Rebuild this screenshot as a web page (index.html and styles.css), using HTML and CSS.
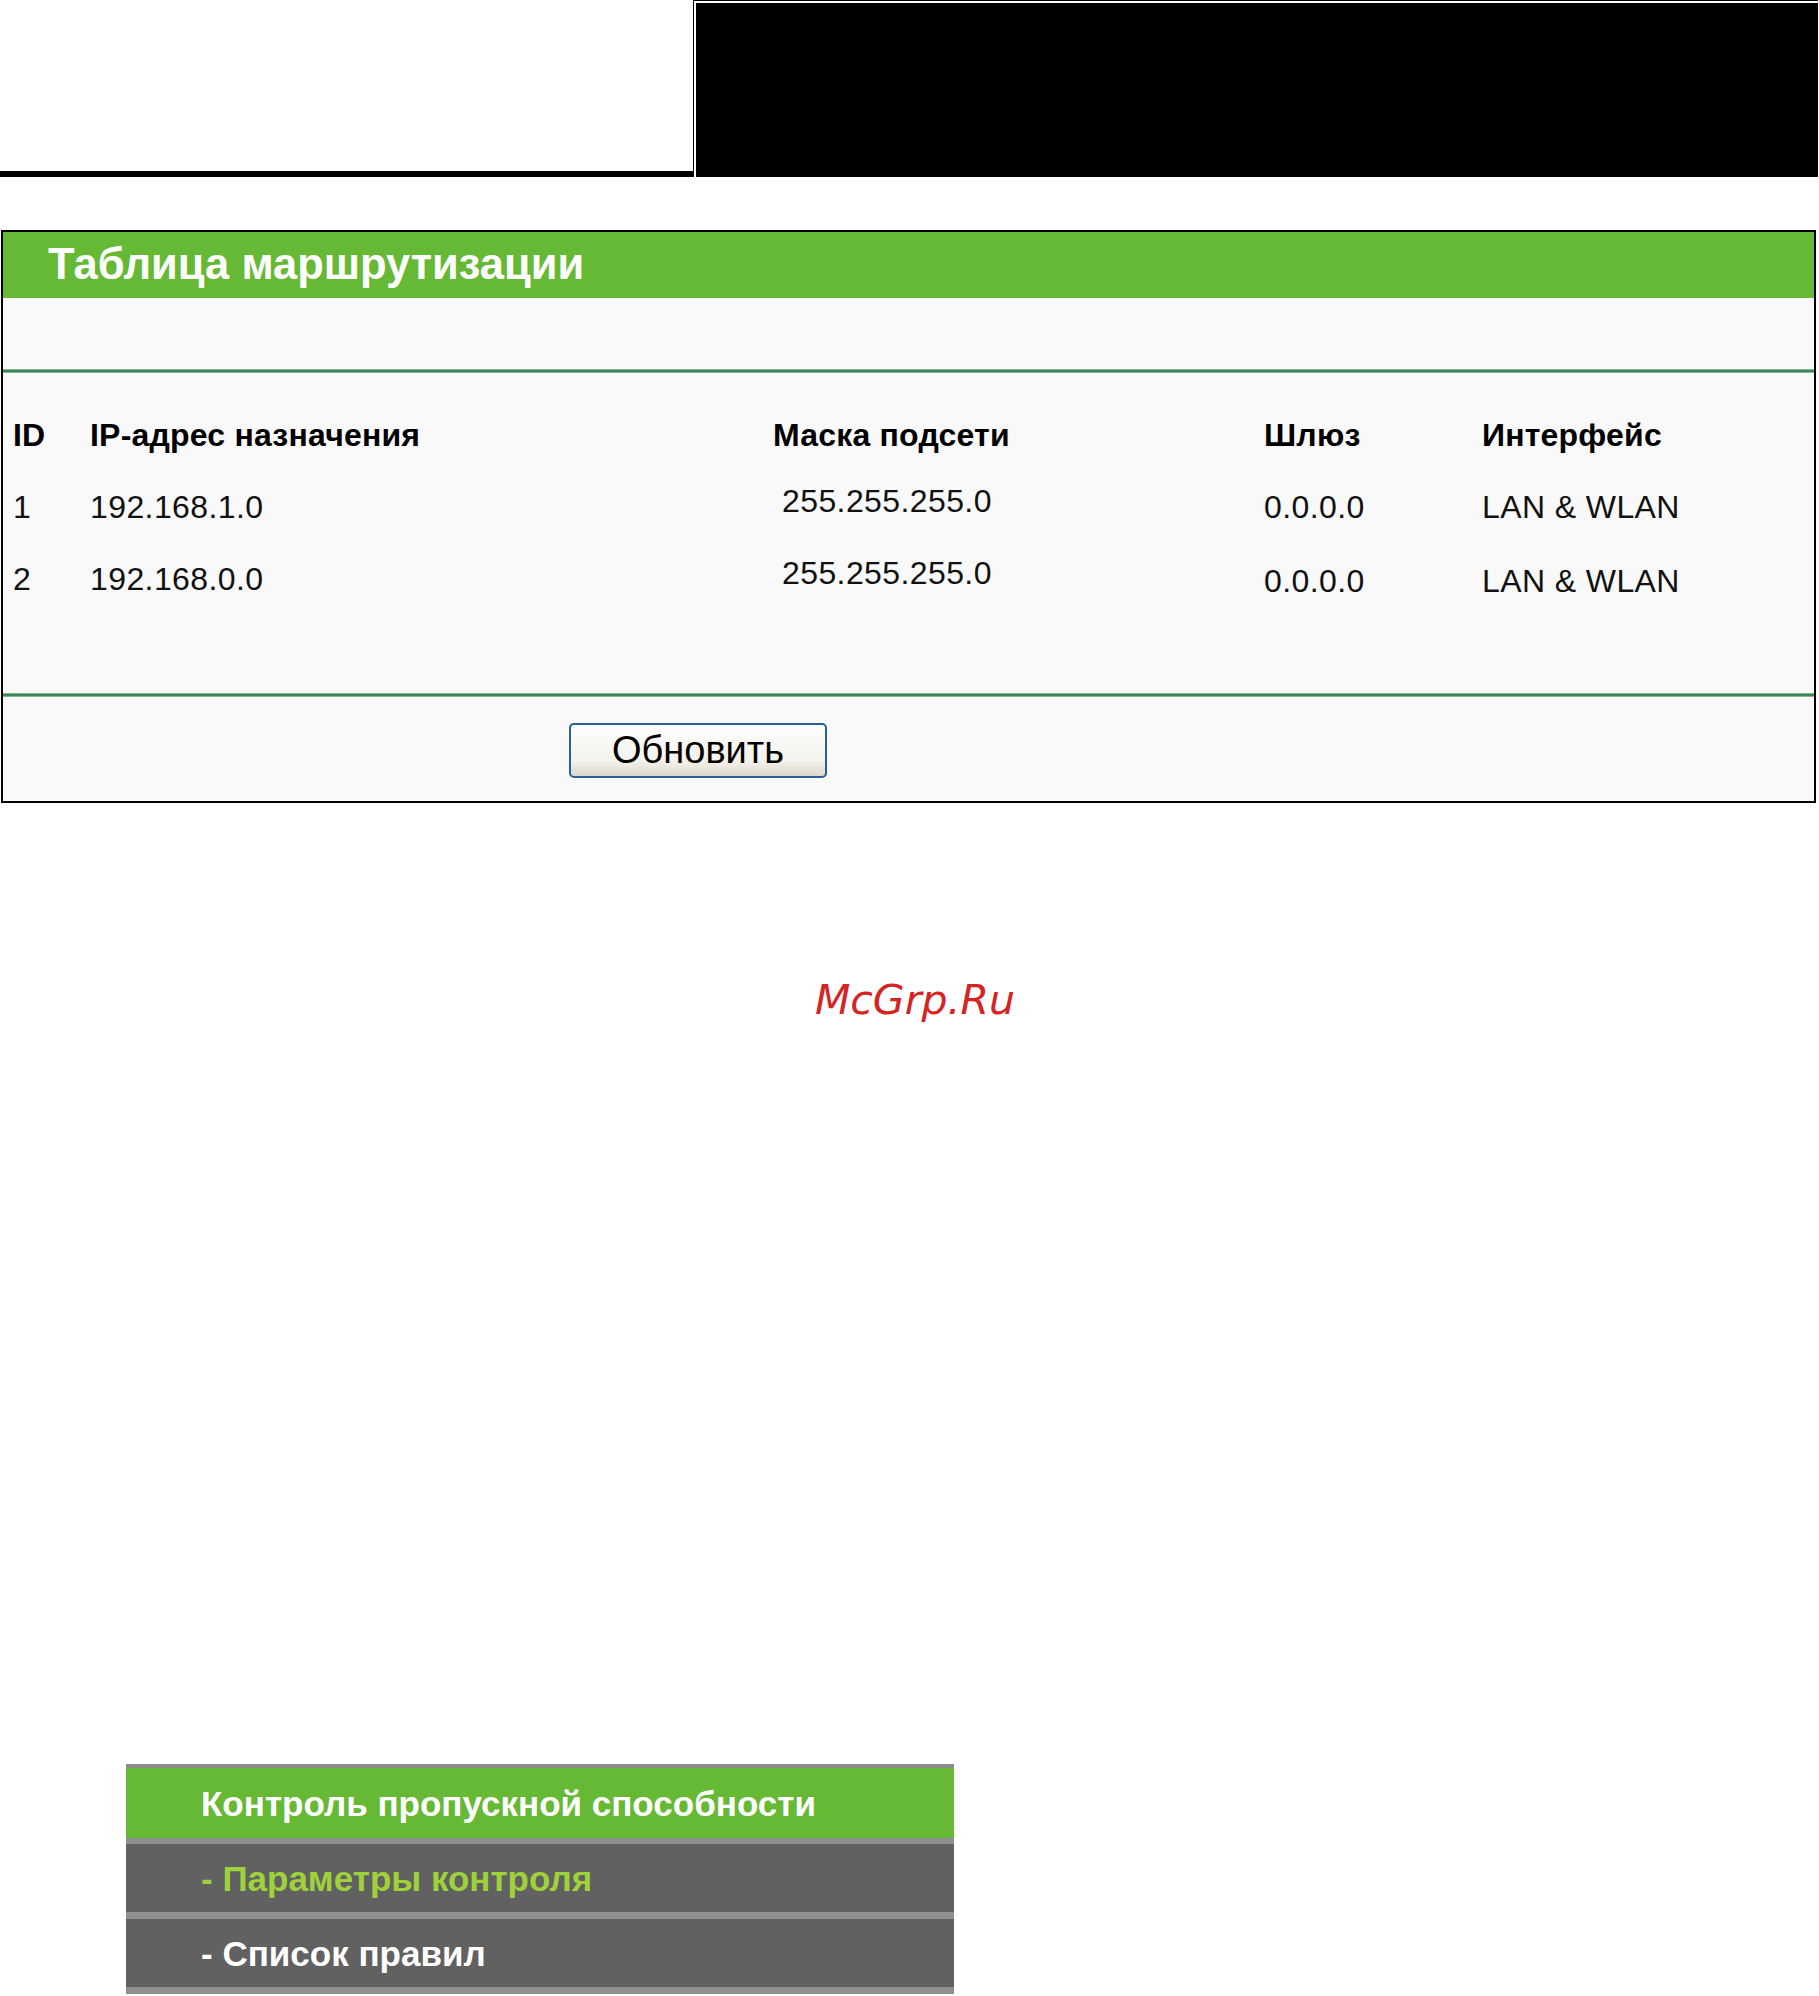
FILE: index.html
```html
<!DOCTYPE html>
<html lang="ru">
<head>
<meta charset="utf-8">
<title>Таблица маршрутизации</title>
<link rel="stylesheet" href="styles.css">
</head>
<body>
<div class="top">
  <div class="top-left"></div>
  <div class="top-right"><div class="top-inner"></div></div>
</div>

<div class="panel">
  <div class="panel-title">Таблица маршрутизации</div>
  <div class="panel-gap"></div>
  <div class="rule"></div>
  <div class="routes">
    <div class="th">ID</div>
    <div class="th">IP-адрес назначения</div>
    <div class="th">Маска подсети</div>
    <div class="th">Шлюз</div>
    <div class="th">Интерфейс</div>

    <div class="td">1</div>
    <div class="td">192.168.1.0</div>
    <div class="td mask">255.255.255.0</div>
    <div class="td">0.0.0.0</div>
    <div class="td">LAN &amp; WLAN</div>

    <div class="td">2</div>
    <div class="td">192.168.0.0</div>
    <div class="td mask">255.255.255.0</div>
    <div class="td low">0.0.0.0</div>
    <div class="td low">LAN &amp; WLAN</div>
  </div>
  <div class="rule"></div>
  <div class="actions">
    <button class="btn" type="button">Обновить</button>
  </div>
</div>

<div class="watermark">McGrp.Ru</div>

<div class="menu">
  <div class="menu-item menu-head">Контроль пропускной способности</div>
  <div class="menu-item menu-active">- Параметры контроля</div>
  <div class="menu-item">- Список правил</div>
</div>
</body>
</html>
```

FILE: styles.css
```css
html, body {
  margin: 0;
  padding: 0;
  background: #ffffff;
}

body {
  width: 1819px;
  height: 1996px;
  overflow: hidden;
  font-family: "Liberation Sans", Arial, sans-serif;
  color: #000;
}

/* ---------- top header ---------- */
.top {
  display: flex;
  height: 177px;
}

.top-left {
  width: 693px;
  box-sizing: border-box;
  border-bottom: 6px solid #000;
  background: #fff;
}

.top-right {
  width: 1125px;
  box-sizing: border-box;
  background: #000;
  padding: 1px 0 0 1px;
}

.top-inner {
  height: 100%;
  box-sizing: border-box;
  border-top: 2px solid #fff;
  border-left: 2px solid #fff;
  background: #000;
}

/* ---------- routing panel ---------- */
.panel {
  margin: 53px 3px 0 1px;
  border: 2px solid #000;
  background: #f9f9f9;
}

.panel-title {
  height: 66px;
  line-height: 64px;
  background: #66b934;
  color: #fff;
  font-weight: bold;
  font-size: 43.5px;
  padding-left: 45px;
}

.panel-gap {
  height: 71px;
}

.rule {
  height: 4px;
  background: linear-gradient(#a9d0b3, #3f8456 35%, #3f8456 65%, #a9d0b3);
}

.routes {
  display: grid;
  grid-template-columns: 77px 683px 491px 218px 1fr;
  grid-auto-rows: 72px;
  padding: 26px 0 78px 10px;
  font-size: 32px;
  letter-spacing: 0.4px;
  line-height: 72px;
}

.th {
  font-weight: bold;
  letter-spacing: 0.2px;
}

.td {
  color: #111;
}

.mask {
  margin-top: -6px;
  padding-left: 9px;
}

.low {
  margin-top: 2px;
}

.actions {
  height: 104px;
  box-sizing: border-box;
  padding: 26px 0 0 566px;
}

.btn {
  display: block;
  width: 258px;
  height: 55px;
  margin: 0;
  padding: 0;
  border: 2px solid #2c5f93;
  border-radius: 5px;
  background: linear-gradient(#fefefd, #f4f2ec 70%, #dcd8cc);
  font-family: "Liberation Sans", Arial, sans-serif;
  font-size: 38px;
  color: #000;
  line-height: 51px;
  text-align: center;
}

/* ---------- watermark ---------- */
.watermark {
  margin-top: 174px;
  padding-left: 11px;
  height: 46px;
  line-height: 46px;
  text-align: center;
  font-family: "DejaVu Sans", sans-serif;
  font-style: oblique;
  font-size: 41px;
  color: #d42424;
}

/* ---------- side menu ---------- */
.menu {
  margin: 741px 0 0 126px;
  width: 828px;
  border-top: 4px solid #8c8c8c;
}

.menu-item {
  height: 68px;
  line-height: 70px;
  padding-left: 75px;
  background: #616161;
  color: #fff;
  font-size: 35px;
  font-weight: bold;
  border-bottom: 7px solid #8f8f8f;
}

.menu-head {
  height: 70px;
  line-height: 72px;
  background: #66b934;
  border-bottom-width: 6px;
}

.menu-active {
  color: #9fd23a;
}
```
